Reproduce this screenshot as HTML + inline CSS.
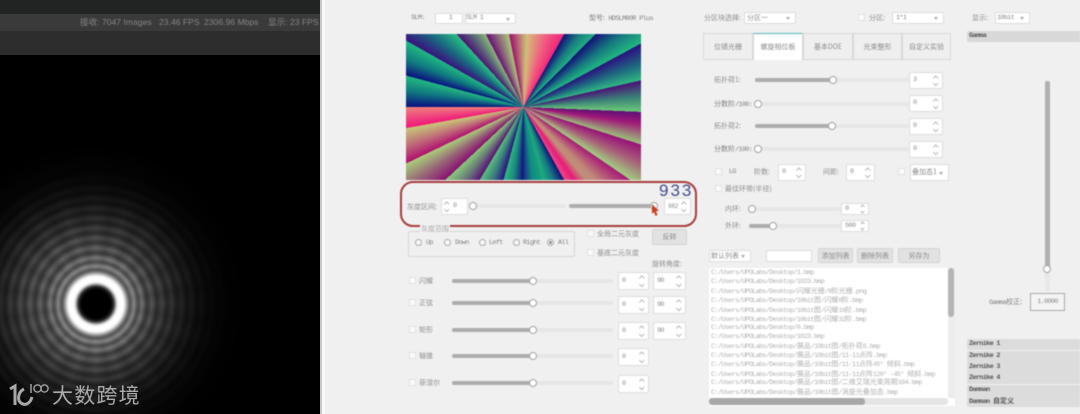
<!DOCTYPE html>
<html><head><meta charset="utf-8"><style>
html,body{margin:0;padding:0;background:#f0f0f0}
#r{position:relative;width:1080px;height:414px;overflow:hidden;background:#f0f0f0;font-family:"Liberation Mono","Noto Sans CJK SC",monospace;font-size:6.8px;letter-spacing:-.65px;color:#808080}
#r div,#r span{position:absolute;box-sizing:border-box}
#r b{font-weight:400;letter-spacing:0;font-size:7px;font-family:"Noto Sans CJK SC",sans-serif}
#r .z b{font-weight:700}
#p{left:322px;top:0;width:758px;height:414px;filter:blur(.5px)}
.t{white-space:nowrap;line-height:10px;height:10px;color:#808080}
#r .c{font-family:"Noto Sans CJK SC","Liberation Sans",sans-serif;color:#8e8e8e;font-size:7px;letter-spacing:0}
.tr{height:4px;background:#e6e6e6;border-radius:2px}
.fl{height:4px;background:#adadad;border-radius:2px}
.kn{width:8px;height:8px;border-radius:50%;background:#fff;border:1.2px solid #a2a2a2}
.sb,.cb,.in{background:#fff;border:1px solid #dcdcdc;border-radius:2px;color:#8a8a8a;padding-left:3px;white-space:nowrap}
.sb::before,.sb::after{content:"";position:absolute;right:5px;width:2.5px;height:2.5px;border-left:1px solid #b8b8b8;border-top:1px solid #b8b8b8;transform:rotate(45deg)}
.sb::before{top:3px}
.sb::after{bottom:3px;transform:rotate(225deg)}
.s2::before{top:1px;right:4px;width:2px;height:2px}
.s2::after{bottom:1px;right:4px;width:2px;height:2px}
.lf::before,.lf::after{right:auto;left:3px}
.cb::after{content:"";position:absolute;right:5px;top:50%;margin-top:-1px;border:2px solid transparent;border-top:3px solid #aaa}
.ck{width:7px;height:7px;background:#fafafa;border:1px solid #e2e2e2}
.rd{width:7px;height:7px;border-radius:50%;background:#fafafa;border:1px solid #aaa}
.bt{background:#e2e2e2;border:1px solid #d4d4d4;border-radius:2px;text-align:center;font-family:"Noto Sans CJK SC",sans-serif;letter-spacing:0;font-size:7px;color:#8a8a8a}
.tb{top:33px;height:27px;background:#efefef;border:1px solid #d8d8d8;text-align:center;line-height:26px;font-family:"Noto Sans CJK SC",sans-serif;letter-spacing:0;font-size:7px;color:#8a8a8a}
.z{left:645px;width:113px;height:11px;background:#dcdcdc;border-radius:2px 0 0 2px;line-height:11px;padding-left:2px;color:#555;font-weight:bold;white-space:nowrap}
.li{left:2px;white-space:nowrap;line-height:9px;height:9px;color:#b0b0b0}
</style></head><body><div id="r">

<div style="left:0;top:55px;width:320px;height:359px;background:#000;overflow:hidden">
<div style="left:-20px;top:-20px;width:360px;height:399px;filter:blur(1px);background:radial-gradient(circle at 116px 269px,#000 0,#000 15px,#333 18px,#eee 21px,#fff 23px,#fff 28px,#999 31px,#4a4a4a 34px,#8f8f8f 38px,#444 42px,#808080 46px,#3a3a3a 51px,#686868 56px,#343434 61px,#5a5a5a 66px,#2e2e2e 71px,#505050 76px,#282828 81px,#444 86px,#222 91px,#3a3a3a 96px,#1c1c1c 101px,#303030 106px,#161616 111px,#262626 116px,#111 121px,#1c1c1c 126px,#0c0c0c 132px,#101010 140px,#000 165px)"></div>
<div style="left:0;top:0;width:320px;height:359px;background:repeating-conic-gradient(from 0deg at 96px 249px,rgba(0,0,0,0) 0deg,rgba(0,0,0,.16) 9deg,rgba(0,0,0,0) 18deg);-webkit-mask-image:radial-gradient(circle at 96px 249px,transparent 32px,#000 50px);mask-image:radial-gradient(circle at 96px 249px,transparent 32px,#000 50px)"></div>
<div style="left:0;top:0;width:320px;height:359px;background:radial-gradient(circle at 80px 245px,rgba(0,0,0,0) 55px,rgba(0,0,0,.25) 85px,rgba(0,0,0,.7) 125px,#000 165px)"></div>
</div>
<div style="left:0;top:0;width:320px;height:14px;background:#222423"></div>
<div style="left:0;top:14px;width:320px;height:17px;background:#3a3a3a"></div>
<div style="left:0;top:31px;width:320px;height:24px;background:#2d2d2d"></div>
<div class="t" style="left:80px;top:17px;color:#868686;letter-spacing:0;font-family:'Liberation Sans','Noto Sans CJK SC',sans-serif;font-size:8.6px;filter:blur(.4px)">接收: 7047 Images</div>
<div class="t" style="left:159px;top:17px;color:#868686;letter-spacing:0;font-family:'Liberation Sans',sans-serif;font-size:8.6px;filter:blur(.4px)">23.46 FPS</div>
<div class="t" style="left:204px;top:17px;color:#868686;letter-spacing:0;font-family:'Liberation Sans',sans-serif;font-size:8.6px;filter:blur(.4px)">2306.96 Mbps</div>
<div class="t" style="left:268px;top:17px;color:#868686;letter-spacing:0;font-family:'Liberation Sans','Noto Sans CJK SC',sans-serif;font-size:8.6px;filter:blur(.4px)">显示: 23 FPS</div>
<svg style="position:absolute;left:9px;top:382px" width="40" height="25" viewBox="0 0 40 25" fill="none" stroke="#a8a8a8"><path d="M1 7 L6 4 V23" stroke-width="3"/><path d="M15 7 C9 10 8 18 12 21 C16 24 21 22 23 15" stroke-width="3"/><path d="M22 2 V11" stroke-width="1.4"/><circle cx="28.5" cy="6.5" r="3.6" stroke-width="1.3"/><circle cx="35.5" cy="6.5" r="3.6" stroke-width="1.3"/></svg>
<div class="t" style="left:52px;top:383px;height:24px;line-height:24px;font-size:21px;color:#aaa;font-family:'Noto Sans CJK SC',sans-serif;letter-spacing:1.2px;filter:blur(.3px)">大数跨境</div>

<div style="left:320px;top:0;width:2px;height:414px;background:#c9c9c9"></div>
<div style="left:322px;top:0;width:3px;height:414px;background:#f9f9f9"></div>

<div id="p">
<div class="t" style="left:89px;top:13px">SLM:</div>
<div class="in" style="left:113px;top:13px;width:28px;height:11px;line-height:9px;text-align:center">1</div>
<div class="cb" style="left:143px;top:13px;width:51px;height:11px;line-height:9px;padding-left:0">SLM 1</div>
<div class="t" style="left:267px;top:13px"><b>型号:</b> HDSLM80R Plus</div>

<div style="left:84px;top:33.5px;width:235px;height:146.5px;filter:blur(.3px);background:conic-gradient(from 0deg,#c8a078 0deg,#c8c878 3.4deg,#d8b878 3.4deg,#f05a80 18deg,#f02878 29.2deg,#10107a 29.2deg,#1a7f80 38deg,#20b080 44.7deg,#140f78 44.7deg,#167a80 54deg,#20b880 61.6deg,#2a1080 61.6deg,#1e6a80 70deg,#2fb880 77.2deg,#4a1078 77.2deg,#3a8078 85deg,#6cc878 92.4deg,#601078 92.4deg,#a01878 98deg,#9ac078 107.7deg,#981078 107.7deg,#a86078 116deg,#a0d080 124.3deg,#a81a78 124.3deg,#c08878 135deg,#c09078 139deg,#e81a78 145.2deg,#f04a88 150.8deg,#10107a 150.8deg,#157a80 158deg,#20b080 165.2deg,#18a080 165.2deg,#108a80 173deg,#1a2a8a 180deg,#0f1080 180deg,#1a8a80 188deg,#30b880 195.3deg,#2a1080 195.3deg,#3a7a80 203deg,#58c478 211deg,#5a1078 211deg,#6a7a78 219deg,#88cc78 227deg,#881070 227deg,#986878 236deg,#a8d078 244.3deg,#b01070 244.3deg,#c07078 252deg,#c8c878 259.8deg,#f01878 259.8deg,#f04a80 265deg,#f08078 270deg,#0a0f80 270deg,#107a80 278deg,#22b880 285deg,#0a1080 285deg,#107a80 292deg,#20b880 299.5deg,#3a1080 299.5deg,#186a80 308deg,#28c080 317.4deg,#501078 317.4deg,#5a6878 325deg,#88b878 332.6deg,#6a1078 332.6deg,#8a6878 340deg,#a8c878 348.7deg,#a01070 348.7deg,#c8a078 360deg)"></div>

<div style="left:78px;top:181px;width:297px;height:46px;border:2px solid #a83c3c;border-radius:13px"></div>
<div class="t" style="left:337px;top:182px;height:17px;line-height:17px;font-size:17px;color:#3f4a8c;font-family:'Liberation Sans',sans-serif;letter-spacing:2px">933</div>
<div class="t c" style="left:85px;top:202px">灰度区间:</div>
<div class="sb lf" style="left:119px;top:198px;width:27px;height:17px;line-height:15px;padding-left:11px">0</div>
<div class="tr" style="left:154px;top:204px;width:90px"></div>
<div class="kn" style="left:146.5px;top:202px"></div>
<div class="fl" style="left:247px;top:204px;width:85px"></div>
<div class="kn" style="left:328px;top:202px"></div>
<svg style="position:absolute;left:328px;top:203px" width="10" height="14" viewBox="0 0 10 14"><path d="M2 1 L9 8 H6 L7.5 12 L5.5 13 L4 9 L2 11 Z" fill="#c8401e"/></svg>
<div class="sb" style="left:342px;top:198px;width:27px;height:17px;line-height:15px;font-size:6px;letter-spacing:-.2px">982</div>

<div style="left:86px;top:231px;width:167px;height:26px;border:1px solid #d6d6d6;border-radius:2px"></div>
<div class="t c" style="left:98px;top:224px;background:#f0f0f0;padding:0 1px;color:#aaa">灰度范围</div>
<div class="rd" style="left:93px;top:239px"></div><div class="t" style="left:104px;top:238px">Up</div>
<div class="rd" style="left:122px;top:239px"></div><div class="t" style="left:133px;top:238px">Down</div>
<div class="rd" style="left:157px;top:239px"></div><div class="t" style="left:167px;top:238px">Left</div>
<div class="rd" style="left:191px;top:239px"></div><div class="t" style="left:201px;top:238px">Right</div>
<div class="rd" style="left:225px;top:239px"></div><div style="left:227px;top:241px;width:3px;height:3px;border-radius:50%;background:#888"></div><div class="t" style="left:236px;top:238px">All</div>
<div class="ck" style="left:265px;top:230px"></div><div class="t c" style="left:275px;top:229px">全局二元灰度</div>
<div class="ck" style="left:265px;top:249px"></div><div class="t c" style="left:275px;top:248px">基底二元灰度</div>
<div class="bt" style="left:330px;top:229px;width:35px;height:16px;line-height:15px">反转</div>
<div class="t c" style="left:330px;top:259px">旋转角度:</div>

<div class="ck" style="left:87px;top:277px"></div><div class="t c" style="left:97px;top:276px">闪耀</div>
<div class="tr" style="left:130px;top:279px;width:161px"></div><div class="fl" style="left:130px;top:279px;width:81px"></div><div class="kn" style="left:207px;top:277px"></div>
<div class="sb" style="left:296px;top:272px;width:31px;height:18px;line-height:16px">0</div><div class="sb" style="left:331px;top:272px;width:33px;height:18px;line-height:16px">90</div>

<div class="ck" style="left:87px;top:299px"></div><div class="t c" style="left:97px;top:298px">正弦</div>
<div class="tr" style="left:130px;top:301px;width:161px"></div><div class="fl" style="left:130px;top:301px;width:81px"></div><div class="kn" style="left:207px;top:299px"></div>
<div class="sb" style="left:296px;top:296px;width:31px;height:18px;line-height:16px">0</div><div class="sb" style="left:331px;top:296px;width:33px;height:18px;line-height:16px">90</div>

<div class="ck" style="left:87px;top:326px"></div><div class="t c" style="left:97px;top:325px">矩形</div>
<div class="tr" style="left:130px;top:328px;width:161px"></div><div class="fl" style="left:130px;top:328px;width:81px"></div><div class="kn" style="left:207px;top:326px"></div>
<div class="sb" style="left:296px;top:322px;width:31px;height:18px;line-height:16px">0</div><div class="sb" style="left:331px;top:322px;width:33px;height:18px;line-height:16px">90</div>

<div class="ck" style="left:87px;top:352px"></div><div class="t c" style="left:97px;top:351px">轴锥</div>
<div class="tr" style="left:130px;top:354px;width:161px"></div><div class="fl" style="left:130px;top:354px;width:81px"></div><div class="kn" style="left:207px;top:352px"></div>
<div class="sb" style="left:296px;top:348px;width:31px;height:18px;line-height:16px">0</div>

<div class="ck" style="left:87px;top:379px"></div><div class="t c" style="left:97px;top:378px">菲涅尔</div>
<div class="tr" style="left:130px;top:381px;width:161px"></div><div class="fl" style="left:130px;top:381px;width:81px"></div><div class="kn" style="left:207px;top:379px"></div>
<div class="sb" style="left:296px;top:375px;width:31px;height:18px;line-height:16px">0</div>

<div class="t c" style="left:382px;top:13px">分区块选择:</div>
<div class="cb" style="left:422px;top:12px;width:52px;height:12px;line-height:10px;padding-left:2px"><b>分区一</b></div>
<div class="ck" style="left:536px;top:14px"></div><div class="t c" style="left:547px;top:13px">分区:</div>
<div class="cb" style="left:570px;top:12px;width:52px;height:12px;line-height:10px">1*1</div>
<div class="t c" style="left:650px;top:13px">显示:</div>
<div class="cb" style="left:673px;top:12px;width:35px;height:12px;line-height:10px;padding-left:1px">10bit</div>
<div class="z" style="top:31px;background:#d8d8d8">Gamma</div>

<div class="tb" style="left:381px;width:50px">位错光栅</div>
<div class="tb" style="left:431px;width:50px;background:#fff;border-top:1px solid #5ab4b4;border-bottom:none">螺旋相位板</div>
<div class="tb" style="left:481px;width:50px">基本DOE</div>
<div class="tb" style="left:531px;width:49px">光束整形</div>
<div class="tb" style="left:580px;width:49px">自定义实验</div>

<div class="t c" style="left:392px;top:75px">拓扑荷1:</div>
<div class="tr" style="left:433px;top:78px;width:154px"></div><div class="fl" style="left:433px;top:78px;width:78px"></div><div class="kn" style="left:507px;top:76px"></div>
<div class="sb" style="left:587px;top:72px;width:34px;height:17px;line-height:15px">3</div>

<div class="t" style="left:392px;top:99px"><b>分数阶</b>/100:</div>
<div class="tr" style="left:433px;top:102px;width:154px"></div><div class="kn" style="left:432px;top:100px"></div>
<div class="sb" style="left:587px;top:95px;width:34px;height:17px;line-height:15px">0</div>

<div class="t c" style="left:392px;top:121px">拓扑荷2:</div>
<div class="tr" style="left:433px;top:124px;width:154px"></div><div class="fl" style="left:433px;top:124px;width:77px"></div><div class="kn" style="left:506px;top:122px"></div>
<div class="sb" style="left:587px;top:118px;width:34px;height:17px;line-height:15px">0</div>

<div class="t" style="left:392px;top:144px"><b>分数阶</b>/100:</div>
<div class="tr" style="left:433px;top:147px;width:154px"></div><div class="kn" style="left:432px;top:145px"></div>
<div class="sb" style="left:587px;top:141px;width:34px;height:17px;line-height:15px">0</div>

<div class="ck" style="left:393px;top:168px"></div><div class="t" style="left:407px;top:167px">LG</div>
<div class="t c" style="left:432px;top:167px">阶数:</div>
<div class="sb" style="left:456px;top:164px;width:28px;height:17px;line-height:15px">0</div>
<div class="t c" style="left:501px;top:167px">间距:</div>
<div class="sb" style="left:524px;top:164px;width:29px;height:17px;line-height:15px">0</div>
<div class="ck" style="left:576px;top:168px"></div>
<div class="cb" style="left:588px;top:164px;width:39px;height:17px;line-height:15px;padding-left:1px"><b>叠加态1</b></div>

<div class="ck" style="left:393px;top:185px"></div><div class="t c" style="left:403px;top:184px">最佳环带(半径)</div>
<div class="t c" style="left:403px;top:204px">内环:</div>
<div class="tr" style="left:434px;top:207px;width:85px"></div><div class="kn" style="left:426px;top:205px"></div>
<div class="sb s2" style="left:519px;top:203px;width:28px;height:12px;line-height:10px">0</div>
<div class="t c" style="left:403px;top:221px">外环:</div>
<div class="tr" style="left:427px;top:224px;width:92px"></div><div class="fl" style="left:427px;top:224px;width:24px"></div><div class="kn" style="left:447px;top:222px"></div>
<div class="sb s2" style="left:519px;top:220px;width:28px;height:12px;line-height:10px">500</div>

<div class="cb" style="left:387px;top:250px;width:42px;height:12px;line-height:10px;padding-left:1px"><b>默认列表</b></div>
<div class="in" style="left:444px;top:250px;width:46px;height:12px"></div>
<div class="bt" style="left:496px;top:248px;width:35px;height:15px;line-height:14px">添加列表</div>
<div class="bt" style="left:535px;top:248px;width:36px;height:15px;line-height:14px">删除列表</div>
<div class="bt" style="left:576px;top:248px;width:42px;height:15px;line-height:14px">另存为</div>

<div style="left:387px;top:268px;width:246px;height:138px;background:#fff;overflow:hidden">
<div class="li" style="top:1px">C:/Users/UPOLabs/Desktop/1.bmp</div>
<div class="li" style="top:10px">C:/Users/UPOLabs/Desktop/1023.bmp</div>
<div class="li" style="top:19px">C:/Users/UPOLabs/Desktop/<b>闪耀光栅</b>/8<b>阶光栅</b>.png</div>
<div class="li" style="top:28px">C:/Users/UPOLabs/Desktop/10bit<b>图</b>/<b>闪耀</b>8<b>阶</b>.bmp</div>
<div class="li" style="top:38px">C:/Users/UPOLabs/Desktop/10bit<b>图</b>/<b>闪耀</b>16<b>阶</b>.bmp</div>
<div class="li" style="top:47px">C:/Users/UPOLabs/Desktop/10bit<b>图</b>/<b>闪耀</b>32<b>阶</b>.bmp</div>
<div class="li" style="top:56px">C:/Users/UPOLabs/Desktop/0.bmp</div>
<div class="li" style="top:65px">C:/Users/UPOLabs/Desktop/1023.bmp</div>
<div class="li" style="top:74px">C:/Users/UPOLabs/Desktop/<b>展品</b>/10bit<b>图</b>/<b>拓扑荷</b>6.bmp</div>
<div class="li" style="top:83px">C:/Users/UPOLabs/Desktop/<b>展品</b>/10bit<b>图</b>/11-11<b>点阵</b>.bmp</div>
<div class="li" style="top:92px">C:/Users/UPOLabs/Desktop/<b>展品</b>/10bit<b>图</b>/11-11<b>点阵</b>45° <b>倾斜</b>.bmp</div>
<div class="li" style="top:102px">C:/Users/UPOLabs/Desktop/<b>展品</b>/10bit<b>图</b>/11-11<b>点阵</b>120° -45° <b>倾斜</b>.bmp</div>
<div class="li" style="top:110px">C:/Users/UPOLabs/Desktop/<b>展品</b>/10bit<b>图</b>/<b>二维艾瑞光束周期</b>104.bmp</div>
<div class="li" style="top:120px">C:/Users/UPOLabs/Desktop/<b>展品</b>/10bit<b>图</b>/<b>涡旋光叠加态</b>.bmp</div>
<div style="left:239px;top:0;width:7px;height:130px;background:#ececec"></div>
<div style="left:239px;top:0;width:6px;height:49px;background:#b4b4b4;border-radius:3px"></div>
<div style="left:0;top:130px;width:239px;height:7px;background:#e4e4e4;border-radius:3px"></div>
<div style="left:0;top:130px;width:156px;height:7px;background:#a8a8a8;border-radius:3px"></div>
</div>

<div style="left:723px;top:81px;width:5px;height:188px;background:#b0b0b0;border-radius:2px"></div>
<div style="left:723px;top:271px;width:5px;height:20px;background:#e8e8e8"></div>
<div class="kn" style="left:721px;top:265px"></div>
<div class="t" style="left:667px;top:297px">Gamma<b>校正:</b></div>
<div style="left:708px;top:293px;width:35px;height:18px;border:1px solid #aaa;background:#f4f4f4;text-align:center;line-height:16px;color:#888">1.0000</div>

<div class="z" style="top:339px">Zernike 1</div>
<div class="z" style="top:351px">Zernike 2</div>
<div class="z" style="top:362px">Zernike 3</div>
<div class="z" style="top:373px">Zernike 4</div>
<div class="z" style="top:385px">Damman</div>
<div class="z" style="top:396px">Damman <b>自定义</b></div>
</div>
</div></body></html>
